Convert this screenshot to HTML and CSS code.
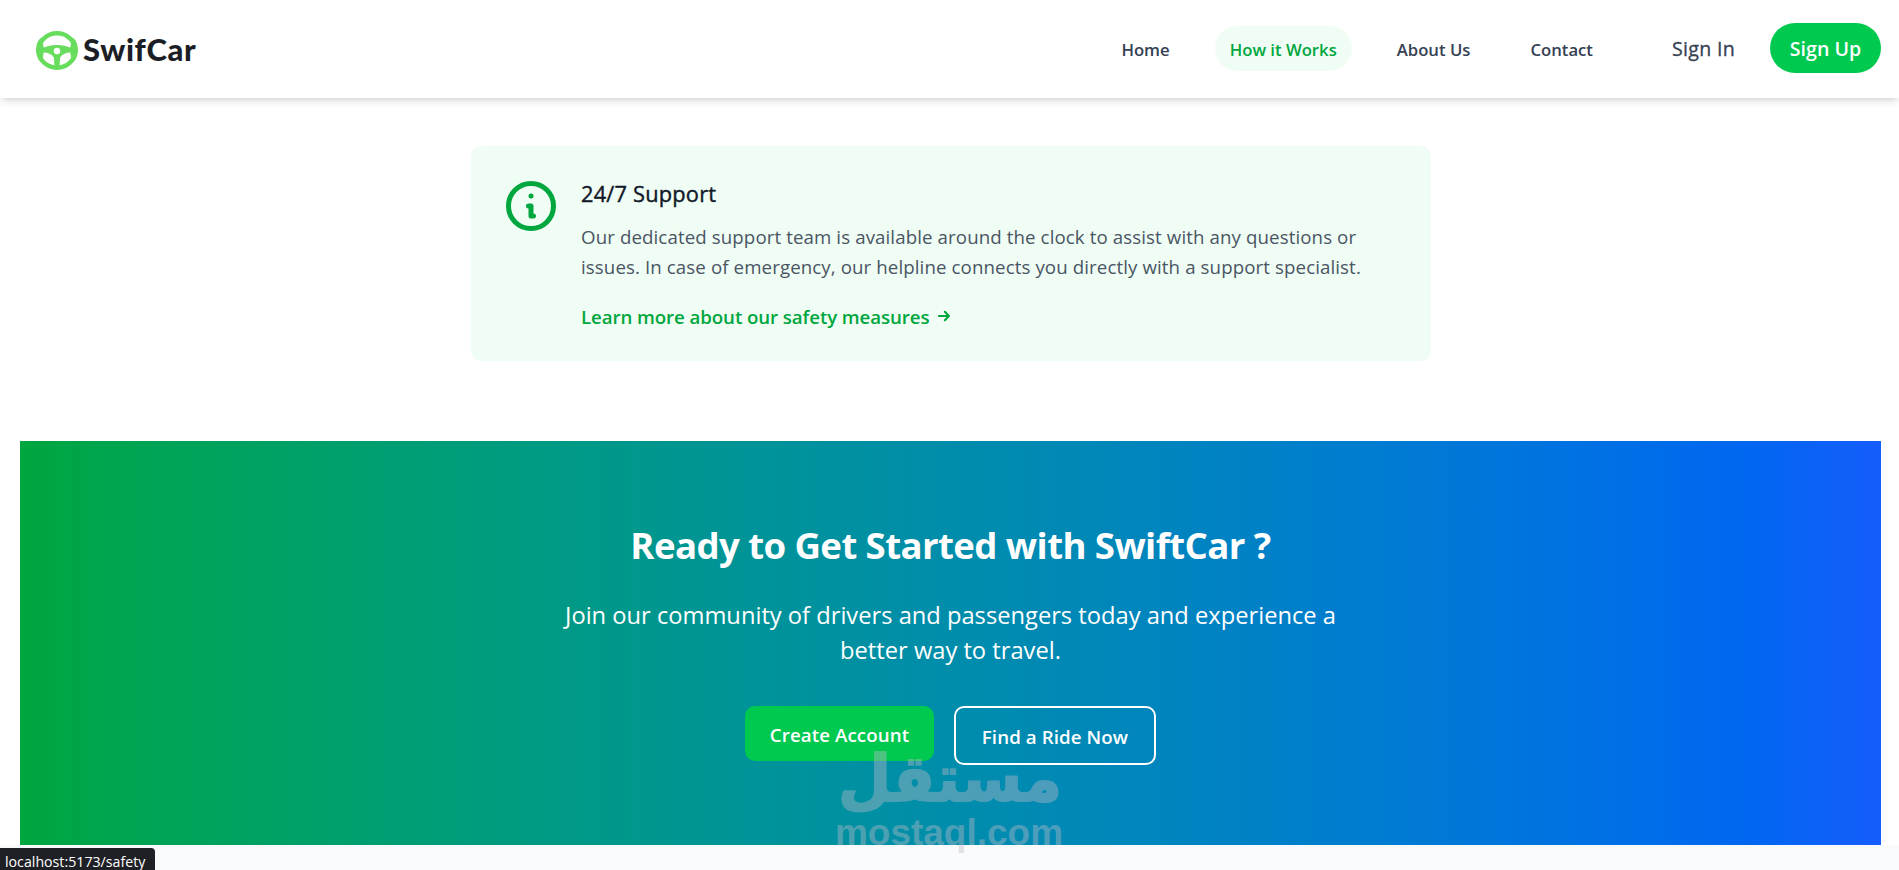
FILE: index.html
```html
<!DOCTYPE html>
<html lang="en">
<head>
    <meta charset="UTF-8">
    <title>SwifCar</title>
    <link rel="stylesheet" href="styles.css">
</head>
<body>
    <header class="header">
        <a class="logo" href="#">
            <svg class="wheel" viewBox="0 0 42 39">
                <ellipse cx="21" cy="19.5" rx="18.3" ry="17.2" fill="none" stroke="#67dc5d" stroke-width="4.4"/>
                <path d="M0.6 14Q2 8 6 6.500L8 18Q7 28 6 32Q1 29 0 20ZM41.400 14Q40 8 36 6.500L34 18Q35 28 36 32Q41 29 42 20Z" fill="#67dc5d"/>
                <path d="M6 17.500Q12 14 21 14Q30 14 36 17.500V21.500Q27 21 24 27L23.500 37H18.500L18 27Q15 21 6 21.500Z" fill="#67dc5d"/>
                <circle cx="21" cy="20" r="3.200" fill="#fff"/>
            </svg>
            <span class="logo-text">SwifCar</span>
        </a>
        <nav class="nav">
            <a class="nav-link" href="#">Home</a>
            <a class="nav-link active" href="#">How it Works</a>
            <a class="nav-link" href="#">About Us</a>
            <a class="nav-link" href="#">Contact</a>
        </nav>
        <div class="auth">
            <a class="sign-in" href="#">Sign In</a>
            <a class="sign-up" href="#">Sign Up</a>
        </div>
    </header>

    <main>
        <section class="support">
            <svg class="info-icon" viewBox="0 0 24 24" fill="none" stroke="currentColor" stroke-width="2" stroke-linecap="round" stroke-linejoin="round">
                <path d="M13 16h-1v-4h-1m1-4h.01M21 12a9 9 0 11-18 0 9 9 0 0118 0z"/>
            </svg>
            <div class="support-body">
                <h3>24/7 Support</h3>
                <p>Our dedicated support team is available around the clock to assist with any questions or<br>issues. In case of emergency, our helpline connects you directly with a support specialist.</p>
                <a class="learn-more" href="#">
                    <span>Learn more about our safety measures</span>
                    <svg viewBox="0 0 24 24" fill="none" stroke="currentColor" stroke-width="2.5" stroke-linecap="round" stroke-linejoin="round">
                        <path d="M13 7l5 5m0 0l-5 5m5-5H6"/>
                    </svg>
                </a>
            </div>
        </section>

        <section class="cta">
            <h2>Ready to Get Started with SwiftCar ?</h2>
            <p>Join our community of drivers and passengers today and experience a<br>better way to travel.</p>
            <div class="cta-buttons">
                <a class="button create" href="#">Create Account</a>
                <a class="button outline" href="#">Find a Ride Now</a>
            </div>
        </section>
    </main>

    <footer class="footer"></footer>

    <svg class="watermark" viewBox="0 0 228 110">
        <text class="watermark-ar" x="114" y="54" text-anchor="middle" textLength="224" lengthAdjust="spacingAndGlyphs">مستقل</text>
        <text class="watermark-en" x="-1" y="98" textLength="228" lengthAdjust="spacingAndGlyphs">mostaql.com</text>
    </svg>
    <div class="status">localhost:5173/safety</div>
</body>
</html>
```

FILE: styles.css
```css
* {
    box-sizing: border-box;
    margin: 0;
    padding: 0;
}

body {
    height: 870px;
    overflow: hidden;
    background-color: #fff;
    font-family: "Open Sans", "Noto Sans", sans-serif;
    font-size: 18.7px;
}

a {
    color: inherit;
    text-decoration: none;
    white-space: nowrap;
}

.header {
    display: flex;
    align-items: center;
    height: 98px;
    padding: 0 18px 2px 36px;
    background-color: #fff;
    box-shadow: 0 5px 7.5px -1.25px rgba(0, 0, 0, 0.1), 0 2.5px 5px -2.5px rgba(0, 0, 0, 0.1);
}

.logo {
    display: flex;
    align-items: center;
    gap: 5px;
    margin-right: auto;
    padding-top: 2px;
}

.wheel {
    width: 42px;
    height: 39px;
    margin-top: 3px;
}

.logo-text {
    font-family: Lato, sans-serif;
    font-size: 31px;
    font-weight: 900;
    letter-spacing: 0.6px;
    color: #1c1e26;
}

.nav {
    display: flex;
    gap: 30px;
    padding-top: 1px;
}

.nav-link {
    height: 45px;
    padding: 0 15px;
    border-radius: 23px;
    font-size: 16.7px;
    font-weight: 600;
    line-height: 47px;
    color: #364153;
}

.nav-link.active {
    background-color: #f0fdf4;
    color: #00a63e;
}

.auth {
    display: flex;
    align-items: center;
    margin-left: 64px;
    gap: 35px;
}

.sign-in {
    font-size: 19.6px;
    letter-spacing: 0.3px;
    color: #364153;
    -webkit-text-stroke: 0.3px currentColor;
}

.sign-up {
    width: 111px;
    height: 50px;
    border-radius: 25px;
    background-color: #00c950;
    color: #fff;
    font-size: 19.6px;
    font-weight: 600;
    line-height: 51px;
    text-align: center;
}

.support {
    display: flex;
    gap: 20px;
    width: 960px;
    height: 215px;
    margin: 48px auto 80px 471px;
    padding: 30px;
    border-radius: 10px;
    background-color: #f0fdf4;
}

.info-icon {
    flex: none;
    width: 60px;
    height: 60px;
    color: #00a63e;
}

.support-body h3 {
    margin-bottom: 11px;
    font-size: 21.8px;
    font-weight: 400;
    line-height: 35px;
    letter-spacing: 0.2px;
    color: #101828;
    -webkit-text-stroke: 0.4px currentColor;
}

.support-body p {
    margin-bottom: 20px;
    line-height: 30px;
    letter-spacing: 0.1px;
    color: #4a5565;
    white-space: nowrap;
}

.learn-more {
    display: flex;
    align-items: center;
    gap: 5px;
    color: #00a63e;
    font-weight: 600;
    line-height: 30px;
    letter-spacing: -0.09px;
}

.learn-more svg {
    width: 20px;
    height: 20px;
    margin-bottom: 2px;
}

.cta {
    height: 404px;
    margin: 0 18px 0 20px;
    padding-top: 82px;
    background-image: linear-gradient(to right in oklab, #00a63e, #155dfc);
    color: #fff;
    text-align: center;
}

.cta h2 {
    margin-bottom: 30px;
    font-size: 36.6px;
    font-weight: 700;
    line-height: 45px;
    letter-spacing: -0.58px;
}

.cta p {
    margin-bottom: 38px;
    font-size: 23.7px;
    line-height: 35px;
}

.cta-buttons {
    display: flex;
    justify-content: center;
    align-items: flex-start;
    gap: 20px;
}

.button {
    height: 55px;
    border-radius: 10px;
    font-weight: 600;
    letter-spacing: 0.1px;
    line-height: 58px;
}

.create {
    width: 189px;
    background-color: #00c950;
}

.outline {
    width: 202px;
    height: 59px;
    border: 2px solid #fff;
}

.footer {
    height: 25px;
    background-color: #f9fafb;
}

.watermark {
    position: absolute;
    left: 836px;
    top: 747px;
    width: 228px;
    height: 110px;
    overflow: visible;
    fill: #bebbc8;
    opacity: 0.4;
}

.watermark-ar {
    font: bold 65px "DejaVu Sans", sans-serif;
    stroke: #bebbc8;
    stroke-width: 2px;
    stroke-linejoin: round;
}

.watermark-en {
    font: bold 37px "Liberation Sans", sans-serif;
}

/* link preview in the window corner */
.status {
    position: absolute;
    left: 0;
    bottom: 0;
    width: 155px;
    height: 22px;
    padding-left: 5px;
    border-top-right-radius: 4px;
    background-color: #1f1f26;
    color: #fff;
    font-size: 14.2px;
    line-height: 27px;
    white-space: nowrap;
}
```
